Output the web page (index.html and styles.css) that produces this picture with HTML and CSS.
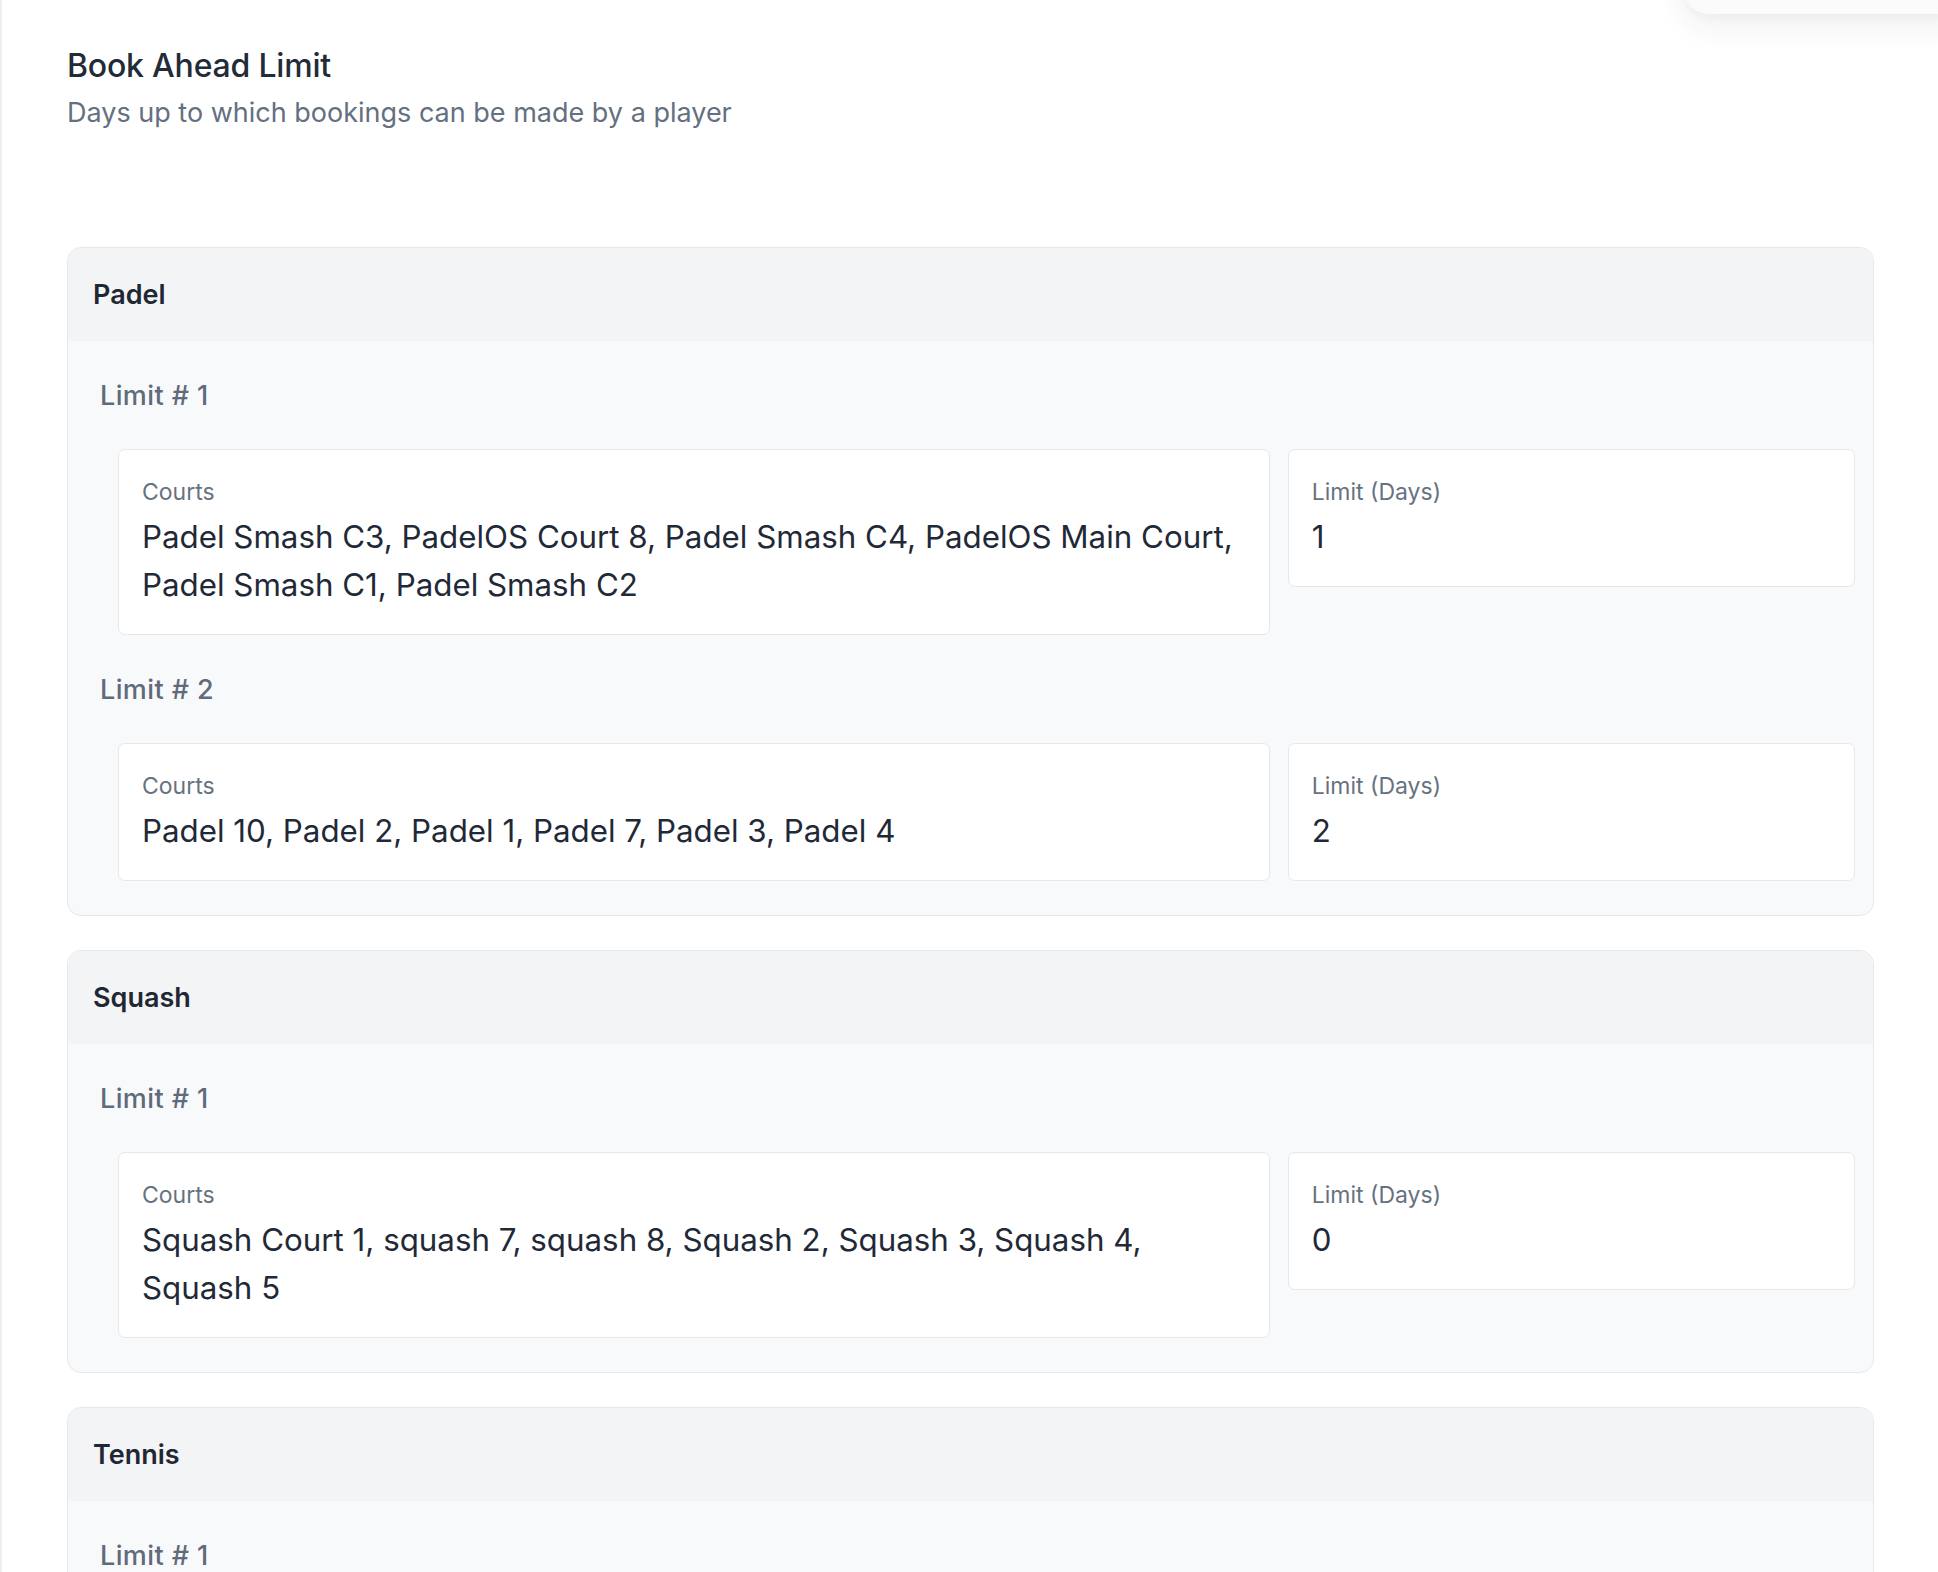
FILE: index.html
```html
<!DOCTYPE html>
<html lang="en">
<head>
<meta charset="utf-8">
<title>Book Ahead Limit</title>
<link rel="stylesheet" href="styles.css">
</head>
<body>
<div class="page">
  <div class="floating-panel"></div>
  <header class="section-head">
    <h1 class="title">Book Ahead Limit</h1>
    <p class="subtitle">Days up to which bookings can be made by a player</p>
  </header>

  <section class="sport-card">
    <div class="sport-head">Padel</div>
    <div class="sport-body">
      <div class="limit-group">
        <div class="limit-label">Limit # 1</div>
        <div class="limit-grid">
          <div class="field">
            <div class="field-label">Courts</div>
            <div class="field-value">Padel Smash C3, PadelOS Court 8, Padel Smash C4, PadelOS Main Court, Padel Smash C1, Padel Smash C2</div>
          </div>
          <div class="field">
            <div class="field-label">Limit (Days)</div>
            <div class="field-value">1</div>
          </div>
        </div>
      </div>
      <div class="limit-group">
        <div class="limit-label">Limit # 2</div>
        <div class="limit-grid">
          <div class="field">
            <div class="field-label">Courts</div>
            <div class="field-value">Padel 10, Padel 2, Padel 1, Padel 7, Padel 3, Padel 4</div>
          </div>
          <div class="field">
            <div class="field-label">Limit (Days)</div>
            <div class="field-value">2</div>
          </div>
        </div>
      </div>
    </div>
  </section>

  <section class="sport-card">
    <div class="sport-head">Squash</div>
    <div class="sport-body">
      <div class="limit-group">
        <div class="limit-label">Limit # 1</div>
        <div class="limit-grid">
          <div class="field">
            <div class="field-label">Courts</div>
            <div class="field-value">Squash Court 1, squash 7, squash 8, Squash 2, Squash 3, Squash 4, Squash 5</div>
          </div>
          <div class="field">
            <div class="field-label">Limit (Days)</div>
            <div class="field-value">0</div>
          </div>
        </div>
      </div>
    </div>
  </section>

  <section class="sport-card sport-card-last">
    <div class="sport-head">Tennis</div>
    <div class="sport-body">
      <div class="limit-group">
        <div class="limit-label">Limit # 1</div>
      </div>
    </div>
  </section>
</div>
</body>
</html>
```

FILE: styles.css
```css
* { box-sizing: border-box; }

html, body {
  margin: 0;
  padding: 0;
  background: #ffffff;
}

body {
  font-family: Inter, Roboto, "Noto Sans", "Liberation Sans", sans-serif;
  color: #1f2937;
  overflow: hidden;
}

.page {
  position: relative;
  min-height: 100vh;
  border-left: 2px solid #efefef;
  padding: 48px 64px 40px 65px;
}

.floating-panel {
  position: absolute;
  top: -40px;
  right: -30px;
  width: 285px;
  height: 54px;
  background: #fbfbfc;
  border-radius: 26px;
  box-shadow: 0 12px 32px rgba(30, 41, 59, 0.07), 0 4px 10px rgba(30, 41, 59, 0.03);
}

.section-head {
  margin-bottom: 118px;
}

.title {
  margin: 0;
  font-size: 32px;
  line-height: 36px;
  font-weight: 500;
  color: #222b38;
  letter-spacing: -0.2px;
}

.subtitle {
  margin: 13px 0 0;
  font-size: 27px;
  line-height: 32px;
  font-weight: 400;
  color: #64707f;
}

.sport-card {
  border: 1px solid #e7e8ea;
  border-radius: 14px;
  overflow: hidden;
  background: #f8f9fa;
  margin-bottom: 34px;
}

.sport-card-last .sport-body {
  padding-bottom: 120px;
}

.sport-head {
  background: #f3f4f6;
  padding: 31px 26px 30px 25px;
  font-size: 27px;
  line-height: 32px;
  font-weight: 600;
  color: #1f2733;
}

.sport-body {
  display: flex;
  flex-direction: column;
  gap: 37px;
  padding: 37px 18px 34px 32px;
}

.limit-label {
  font-size: 27px;
  line-height: 36px;
  font-weight: 500;
  letter-spacing: 0.4px;
  color: #5f6b7a;
  margin-bottom: 35px;
}

.limit-grid {
  display: grid;
  grid-template-columns: 67fr 33fr;
  gap: 18px;
  margin-left: 18px;
  align-items: start;
}

.field {
  background: #ffffff;
  border: 1px solid #e6e8eb;
  border-radius: 7px;
  padding: 25px 23px;
}

.field-label {
  font-size: 23px;
  line-height: 34px;
  color: #677280;
}

.field-value {
  margin-top: 4px;
  font-size: 31.3px;
  line-height: 48px;
  color: #1f2937;
}
```
